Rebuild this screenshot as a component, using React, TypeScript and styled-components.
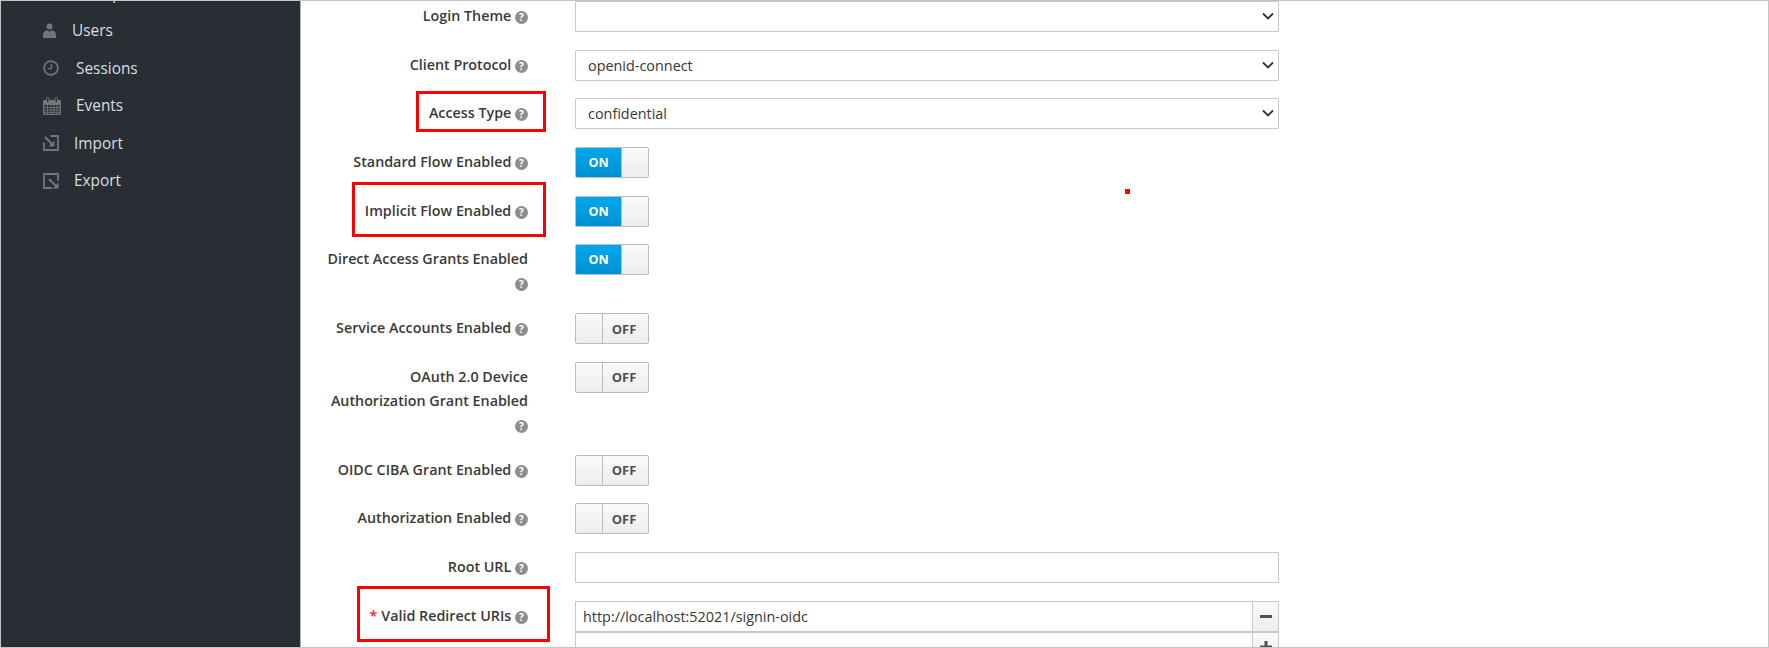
import { ReactNode } from 'react'
import styled, { createGlobalStyle } from 'styled-components'

const GlobalStyle = createGlobalStyle`
  html, body {
    margin: 0;
    padding: 0;
    background: #fff;
  }
  body {
    font-family: "Open Sans", "Noto Sans", sans-serif;
    color: #363636;
  }
`

const Shell = styled.div`
  position: relative;
  box-sizing: border-box;
  width: 1769px;
  height: 648px;
  display: flex;
  overflow: hidden;
  border: 1px solid #c4c4c4;
`

const Sidebar = styled.nav`
  box-sizing: border-box;
  width: 300px;
  flex: none;
  padding-left: 42px;
  background: #292e34;
  border-right: 1px solid #b4b4b4;
`

const NavList = styled.ul`
  list-style: none;
  margin: -26.6px 0 0;
  padding: 0;
`

const NavItem = styled.li`
  height: 37.5px;
  display: flex;
  align-items: center;
  font-size: 15.4px;
  color: #d9dde0;
`

const NavIcon = styled.span<{ $w: number; $gap: number }>`
  width: ${(p) => p.$w}px;
  margin-right: ${(p) => p.$gap}px;
  display: flex;
  flex: none;
  color: #72767b;
`

const GroupsText = styled.span`
  margin-left: 33px;
`

const Main = styled.main`
  flex: 1;
`

const Row = styled.div`
  display: flex;
  margin-bottom: 17.7px;
`

const Label = styled.label`
  box-sizing: border-box;
  width: 227px;
  flex: none;
  padding: 3px 0 0 23px;
  margin-right: 47px;
  font-size: 14.3px;
  font-weight: 600;
  line-height: 24px;
  text-align: right;
  color: #3a3a3a;
`

const Required = styled.span`
  color: #e8282b;
  margin-right: 4px;
`

const HelpBadge = styled.span`
  display: inline-block;
  width: 13px;
  height: 13px;
  vertical-align: 0;
  border-radius: 50%;
  background: #8b8d8f;
  color: #fff;
  font-size: 10px;
  font-weight: 700;
  line-height: 13px;
  text-align: center;
`

const SelectWrap = styled.div`
  position: relative;
  width: 704px;
  height: 31px;
`

const NativeSelect = styled.select`
  box-sizing: border-box;
  width: 100%;
  height: 100%;
  padding: 0 12px;
  appearance: none;
  background: #fff;
  border: 1px solid #c8c8c8;
  border-radius: 1px;
  font-family: inherit;
  font-size: 14.4px;
  color: #363636;
`

const Chevron = styled.svg`
  position: absolute;
  right: 5px;
  top: 11px;
  width: 12px;
  height: 8px;
  pointer-events: none;
`

const TextInput = styled.input`
  box-sizing: border-box;
  display: block;
  width: 704px;
  height: 31px;
  padding: 0 8px;
  background: #fff;
  border: 1px solid #c8c8c8;
  border-radius: 1px;
  font-family: inherit;
  font-size: 14.4px;
  color: #363636;
`

const Toggle = styled.div`
  box-sizing: border-box;
  width: 74px;
  height: 31px;
  display: flex;
  border: 1px solid #bbb;
  border-radius: 2px;
  overflow: hidden;
  font-weight: 700;
`

const ToggleOn = styled.span`
  flex: 1;
  display: flex;
  align-items: center;
  justify-content: center;
  font-size: 12.5px;
  color: #fff;
  background: linear-gradient(#00a9ec, #0090d1);
`

const ToggleOff = styled.span`
  flex: 1;
  display: flex;
  align-items: center;
  justify-content: center;
  padding-right: 3px;
  font-size: 13px;
  color: #4d5258;
  background: linear-gradient(#fafafa, #ededed);
`

const ToggleHandle = styled.span<{ $left?: boolean }>`
  width: 26px;
  flex: none;
  background: linear-gradient(#fafafa, #ededed);
  border-left: ${(p) => (p.$left ? 'none' : '1px solid #bbb')};
  border-right: ${(p) => (p.$left ? '1px solid #bbb' : 'none')};
`

const UriStack = styled.div`
  width: 704px;
  display: flex;
  flex-direction: column;
`

const UriRow = styled.div`
  display: flex;
  height: 31px;
`

const UriInput = styled.input`
  box-sizing: border-box;
  flex: 1;
  min-width: 0;
  padding: 0 7px;
  background: #fff;
  border: 1px solid #c8c8c8;
  border-right: none;
  font-family: inherit;
  font-size: 14.4px;
  color: #363636;
`

const UriButton = styled.button`
  box-sizing: border-box;
  width: 27px;
  padding: 0;
  display: flex;
  align-items: center;
  justify-content: center;
  background: linear-gradient(#fafafa, #ededed);
  border: 1px solid #c8c8c8;
  color: #4d5258;
`

const Highlight = styled.div<{ $x: number; $y: number; $w: number; $h: number }>`
  position: absolute;
  box-sizing: border-box;
  left: ${(p) => p.$x}px;
  top: ${(p) => p.$y}px;
  width: ${(p) => p.$w}px;
  height: ${(p) => p.$h}px;
  border: 3px solid #f00;
`

const RedDot = styled.div`
  position: absolute;
  left: 1124px;
  top: 188px;
  width: 5px;
  height: 5px;
  background: #f00;
`

function Help() {
  return <HelpBadge>?</HelpBadge>
}

function Field({ children, required }: { children: ReactNode; required?: boolean }) {
  return (
    <Label>
      {required && <Required>*</Required>}
      {children} <Help />
    </Label>
  )
}

function Select({ value }: { value: string }) {
  return (
    <SelectWrap>
      <NativeSelect value={value} onChange={() => {}}>
        <option value={value}>{value}</option>
      </NativeSelect>
      <Chevron viewBox="0 0 12 8">
        <path d="M1 1.5 6 6.5 11 1.5" fill="none" stroke="#333" strokeWidth="1.8" />
      </Chevron>
    </SelectWrap>
  )
}

function Switch({ on }: { on?: boolean }) {
  return on ? (
    <Toggle>
      <ToggleOn>ON</ToggleOn>
      <ToggleHandle />
    </Toggle>
  ) : (
    <Toggle>
      <ToggleHandle $left />
      <ToggleOff>OFF</ToggleOff>
    </Toggle>
  )
}

const UserIcon = () => (
  <svg width="13" height="15" viewBox="0 0 13 15">
    <circle cx="6.5" cy="3.4" r="3" fill="currentColor" />
    <path d="M0 15v-3.2C0 9 2.6 7.4 4.6 7.2L6.5 9l1.9-1.8c2 .2 4.6 1.8 4.6 4.6V15z" fill="currentColor" />
  </svg>
)

const ClockIcon = () => (
  <svg width="16" height="16" viewBox="0 0 16 16">
    <circle cx="8" cy="8" r="6.9" fill="none" stroke="currentColor" strokeWidth="1.7" />
    <path d="M8.4 3.8V8.6H4.8" fill="none" stroke="currentColor" strokeWidth="1.4" />
  </svg>
)

const CalendarIcon = () => (
  <svg width="18" height="18" viewBox="0 0 18 18">
    <path
      d="M1 3h16a1 1 0 0 1 1 1v13a1 1 0 0 1-1 1H1a1 1 0 0 1-1-1V4a1 1 0 0 1 1-1zm.3 5v8.7h15.4V8z"
      fill="currentColor"
      fillRule="evenodd"
    />
    <path d="M1 10.5h16M1 13h16M1 15.3h16M4.5 8v9M8 8v9M11 8v9M14 8v9" stroke="currentColor" strokeWidth=".9" />
    <rect x="3.4" y="0.6" width="2.6" height="4.6" rx="1.3" fill="#292e34" stroke="currentColor" strokeWidth=".9" />
    <rect x="12" y="0.6" width="2.6" height="4.6" rx="1.3" fill="#292e34" stroke="currentColor" strokeWidth=".9" />
  </svg>
)

const ImportIcon = () => (
  <svg width="16" height="16" viewBox="0 0 16 16">
    <path d="M1 7.5V15H15V1H7.5" fill="none" stroke="currentColor" strokeWidth="1.8" />
    <path d="M2 2 10 10" stroke="currentColor" strokeWidth="2" />
    <path d="M5.5 11.5H11.5V5.5Z" fill="currentColor" />
  </svg>
)

const ExportIcon = () => (
  <svg width="16" height="16" viewBox="0 0 16 16">
    <path d="M15 8V1H1V15H9" fill="none" stroke="currentColor" strokeWidth="1.8" />
    <path d="M6 6 14 14" stroke="currentColor" strokeWidth="2" />
    <path d="M9.5 15.5H15.5V9.5Z" fill="currentColor" />
  </svg>
)

export default function App() {
  return (
    <>
      <GlobalStyle />
      <Shell>
        <Sidebar>
          <NavList>
            <NavItem>
              <GroupsText>Groups</GroupsText>
            </NavItem>
            <NavItem>
              <NavIcon $w={13} $gap={16}>
                <UserIcon />
              </NavIcon>
              Users
            </NavItem>
            <NavItem>
              <NavIcon $w={16} $gap={17}>
                <ClockIcon />
              </NavIcon>
              Sessions
            </NavItem>
            <NavItem>
              <NavIcon $w={18} $gap={15}>
                <CalendarIcon />
              </NavIcon>
              Events
            </NavItem>
            <NavItem>
              <NavIcon $w={16} $gap={15}>
                <ImportIcon />
              </NavIcon>
              Import
            </NavItem>
            <NavItem>
              <NavIcon $w={16} $gap={15}>
                <ExportIcon />
              </NavIcon>
              Export
            </NavItem>
          </NavList>
        </Sidebar>
        <Main>
          <Row>
            <Field>Login Theme</Field>
            <Select value="" />
          </Row>
          <Row>
            <Field>Client Protocol</Field>
            <Select value="openid-connect" />
          </Row>
          <Row>
            <Field>Access Type</Field>
            <Select value="confidential" />
          </Row>
          <Row>
            <Field>Standard Flow Enabled</Field>
            <Switch on />
          </Row>
          <Row>
            <Field>Implicit Flow Enabled</Field>
            <Switch on />
          </Row>
          <Row>
            <Field>Direct Access Grants Enabled</Field>
            <Switch on />
          </Row>
          <Row>
            <Field>Service Accounts Enabled</Field>
            <Switch />
          </Row>
          <Row>
            <Field>OAuth 2.0 Device Authorization Grant Enabled</Field>
            <Switch />
          </Row>
          <Row>
            <Field>OIDC CIBA Grant Enabled</Field>
            <Switch />
          </Row>
          <Row>
            <Field>Authorization Enabled</Field>
            <Switch />
          </Row>
          <Row>
            <Field>Root URL</Field>
            <TextInput />
          </Row>
          <Row>
            <Field required>Valid Redirect URIs</Field>
            <UriStack>
              <UriRow>
                <UriInput defaultValue="http://localhost:52021/signin-oidc" />
                <UriButton>
                  <svg width="12" height="3" viewBox="0 0 12 3">
                    <rect width="12" height="3" fill="currentColor" />
                  </svg>
                </UriButton>
              </UriRow>
              <UriRow>
                <UriInput />
                <UriButton>
                  <svg width="12" height="12" viewBox="0 0 12 12">
                    <path d="M0 4.5h4.5V0h3v4.5H12v3H7.5V12h-3V7.5H0z" fill="currentColor" />
                  </svg>
                </UriButton>
              </UriRow>
            </UriStack>
          </Row>
        </Main>
        <Highlight $x={415} $y={90} $w={130} $h={41} />
        <Highlight $x={351} $y={181} $w={194} $h={55} />
        <Highlight $x={356} $y={585} $w={193} $h={56} />
        <RedDot />
      </Shell>
    </>
  )
}
